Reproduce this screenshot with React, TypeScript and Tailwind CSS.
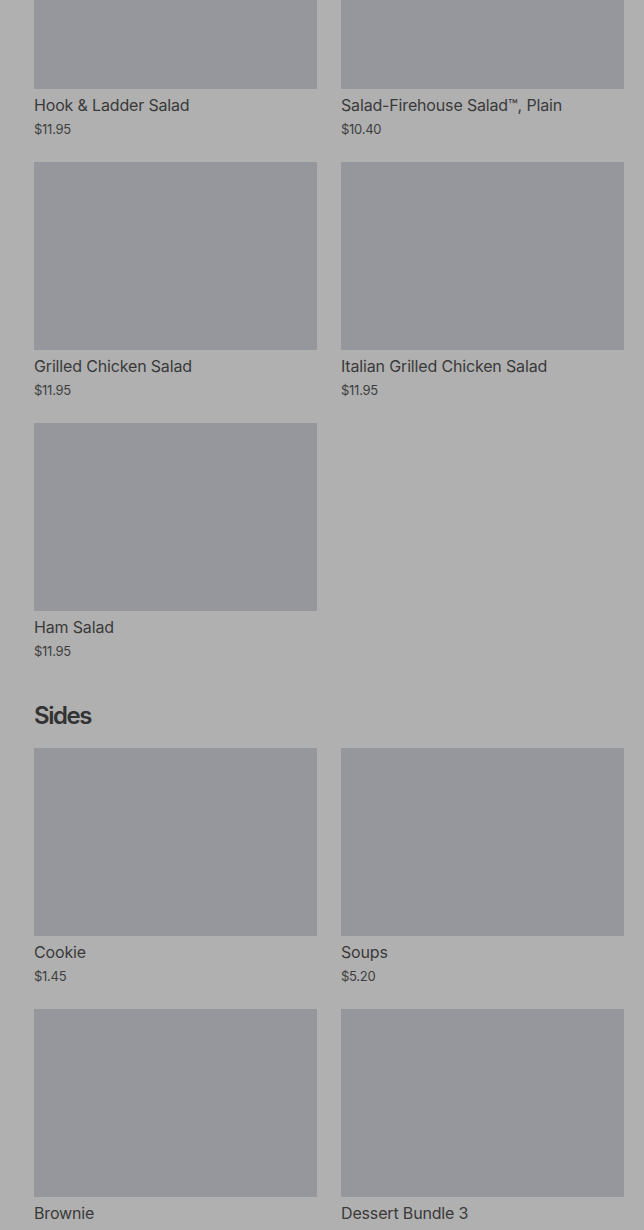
type Item = { name: string; price: string }

const salads: Item[] = [
  { name: "Hook & Ladder Salad", price: "$11.95" },
  { name: "Salad-Firehouse Salad™, Plain", price: "$10.40" },
  { name: "Grilled Chicken Salad", price: "$11.95" },
  { name: "Italian Grilled Chicken Salad", price: "$11.95" },
  { name: "Ham Salad", price: "$11.95" },
]

const sides: Item[] = [
  { name: "Cookie", price: "$1.45" },
  { name: "Soups", price: "$5.20" },
  { name: "Brownie", price: "$2.45" },
  { name: "Dessert Bundle 3", price: "$5.95" },
]

function MenuCard({ item }: { item: Item }) {
  return (
    <div className="flex flex-col">
      <div className="h-[188px] w-full bg-[#95979c]" />
      <div className="mt-[6px] text-[16px] leading-[20px] text-[#3a3a3a] tracking-[-0.01em]">{item.name}</div>
      <div className="mt-[5px] text-[13px] leading-[18px] text-[#3f3f3f] tracking-[-0.02em]">{item.price}</div>
    </div>
  )
}

export default function App() {
  return (
    <div
      className="min-h-[1230px] w-full overflow-hidden bg-[#b0b0b0]"
      style={{ fontFamily: "Inter, 'Liberation Sans', sans-serif" }}
    >
      <div className="pl-[34px] pr-[20px] -mt-[99px]">
        <div className="grid grid-cols-2 gap-x-[24px] gap-y-[24px]">
          {salads.map((s) => (
            <MenuCard key={s.name} item={s} />
          ))}
        </div>

        <h2 className="mt-[40px] mb-[16px] text-[24px] leading-[32px] font-semibold tracking-[-0.06em] text-[#333333]">
          Sides
        </h2>

        <div className="grid grid-cols-2 gap-x-[24px] gap-y-[24px]">
          {sides.map((s) => (
            <MenuCard key={s.name} item={s} />
          ))}
        </div>
      </div>
    </div>
  )
}
